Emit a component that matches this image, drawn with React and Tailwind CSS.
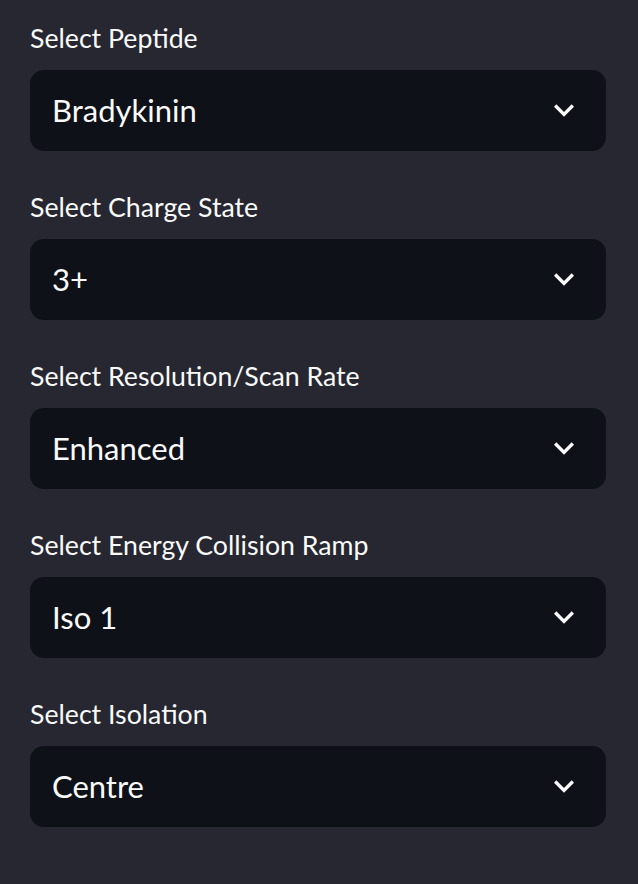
import React, { useState } from 'react';

const fields = [
  { label: 'Select Peptide', value: 'Bradykinin' },
  { label: 'Select Charge State', value: '3+' },
  { label: 'Select Resolution/Scan Rate', value: 'Enhanced' },
  { label: 'Select Energy Collision Ramp', value: 'Iso 1' },
  { label: 'Select Isolation', value: 'Centre' },
];

const Chevron = () => (
  <svg width="40" height="40" viewBox="0 0 24 24" className="shrink-0">
    <path fill="#fafafa" d="M12 15.4l-6-6L7.4 8l4.6 4.6L16.6 8 18 9.4l-6 6z" />
  </svg>
);

const SelectField = ({ label, value }) => (
  <div className="flex flex-col">
    {/* Label */}
    <div className="h-[40px] text-[26.7px] leading-[40px] text-[#fafafa] -mt-[12px] mb-[12px]">{label}</div>
    {/* Select box */}
    <div className="h-[81px] rounded-[14px] bg-[#0e1117] flex items-center justify-between pl-[22px] pr-[22px]">
      <span className="text-[31px] text-[#fafafa]">{value}</span>
      <Chevron />
    </div>
  </div>
);

const App = () => {
  const [items] = useState(fields);

  return (
    <div
      className="w-[638px] h-[884px] bg-[#262730] pl-[30px] pr-[32px] pt-[30px] flex flex-col gap-[48px]"
      style={{ fontFamily: 'Lato, "Noto Sans", sans-serif' }}
    >
      {items.map((f) => (
        <SelectField key={f.label} label={f.label} value={f.value} />
      ))}
    </div>
  );
};

export default App;
